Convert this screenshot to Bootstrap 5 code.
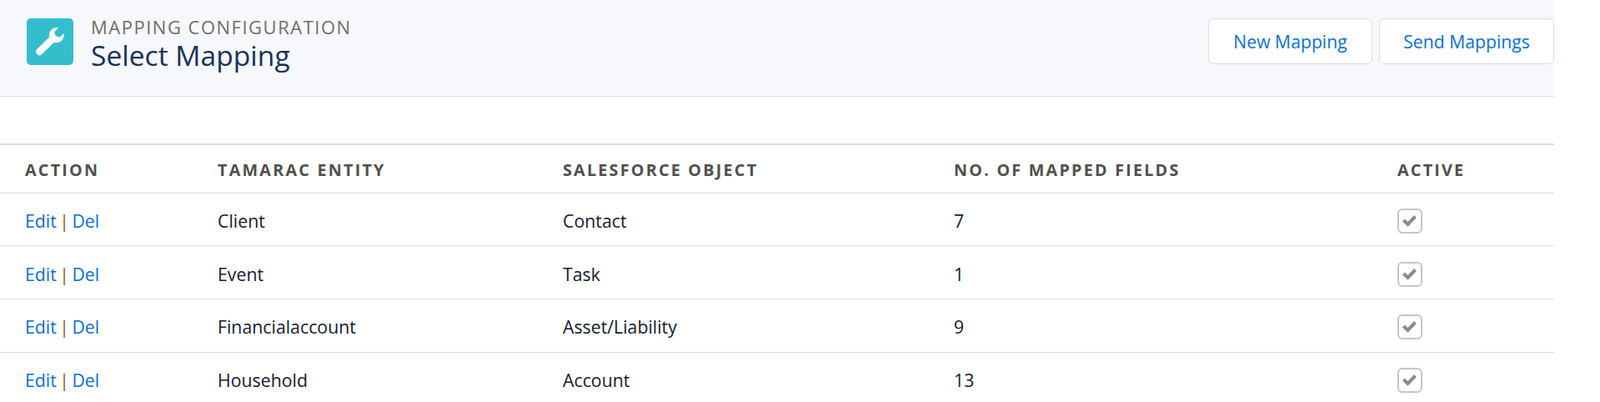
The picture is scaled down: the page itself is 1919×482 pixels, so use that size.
<!DOCTYPE html>
<html lang="en">
<head>
  <meta charset="UTF-8">
  <meta name="viewport" content="width=device-width, initial-scale=1.0">
  <title>Select Mapping</title>
  <link href="https://cdn.jsdelivr.net/npm/bootstrap@5.3.0/dist/css/bootstrap.min.css" rel="stylesheet">
  <style>
    body {
      background-color: #fff;
      font-family: "Open Sans", "Noto Sans", sans-serif;
      color: #16325c;
      overflow: hidden;
    }
    .page-wrap {
      width: 1864px;
    }
    .page-head {
      height: 116px;
      padding: 22px 0 0 32px;
      background-color: #f7f8fb;
      border-bottom: 1px solid #dddbe3;
    }
    .head-icon {
      width: 56px;
      height: 56px;
      margin-right: 21px;
      background-color: #34becd;
      border-radius: 5px;
    }
    .head-over {
      font-size: 22px;
      line-height: 22px;
      letter-spacing: 1.5px;
      margin-top: -1px;
      color: #706e6b;
    }
    .head-title {
      font-size: 33.6px;
      line-height: 47px;
      color: #16325c;
      margin: 0;
      font-weight: 400;
    }
    .head-btn {
      height: 55px;
      background-color: #fff;
      border: 1px solid #d8dde6;
      border-radius: 6px;
      color: #0b6fd6;
      font-size: 21.2px;
      padding: 0;
    }
    .btn-new { width: 197px; }
    .btn-send { width: 210px; }
    .map-table {
      margin-top: 56px;
      border-top: 2px solid #d8dde6;
      table-layout: fixed;
      width: 100%;
      margin-bottom: 0;
    }
    .map-table th,
    .map-table td {
      padding: 4px 0 0 30px;
      border-bottom: 1px solid #d8dde6;
      vertical-align: middle;
      box-shadow: none;
    }
    .map-table th {
      height: 58px;
      font-size: 19.8px;
      font-weight: 700;
      letter-spacing: 2.2px;
      color: #514f4d;
    }
    .map-table td {
      height: 63.7px;
      font-size: 21.3px;
      color: #16202e;
    }
    .map-table a {
      color: #0b6fd6;
      text-decoration: none;
    }
    .map-table .map-actions {
      word-spacing: -2.1px;
    }
    .map-sep {
      color: #8a5a14;
    }
    .check-box {
      display: block;
      width: 30px;
      height: 30px;
      border: 2.5px solid #c6c6c6;
      border-radius: 6px;
    }
  </style>
</head>
<body>
  <div class="page-wrap">
    <div class="page-head d-flex justify-content-between align-items-start">
      <div class="d-flex">
        <div class="head-icon d-flex align-items-center justify-content-center">
          <svg width="56" height="56" viewBox="0.5 0.5 53 53">
            <path fill="#fff" d="M12 35.5 L26.3 21.8 C24.6 16 29.5 10.2 36.6 11 L31.8 16 L33.4 20.4 L37.8 22 L42.8 17.2 C44 24 38 30 31.8 27.6 L17.4 41.4 C15.8 43 13.6 42.8 12.2 41.2 C10.8 39.4 10.6 37 12 35.5 Z"/>
          </svg>
        </div>
        <div>
          <div class="head-over">MAPPING CONFIGURATION</div>
          <h1 class="head-title">Select Mapping</h1>
        </div>
      </div>
      <div class="d-flex gap-2">
        <button class="btn head-btn btn-new" type="button">New Mapping</button>
        <button class="btn head-btn btn-send" type="button">Send Mappings</button>
      </div>
    </div>

    <table class="table map-table">
      <colgroup>
        <col style="width: 231px">
        <col style="width: 414px">
        <col style="width: 469px">
        <col style="width: 532px">
        <col>
      </colgroup>
      <thead>
        <tr>
          <th>ACTION</th>
          <th>TAMARAC ENTITY</th>
          <th>SALESFORCE OBJECT</th>
          <th>NO. OF MAPPED FIELDS</th>
          <th>ACTIVE</th>
        </tr>
      </thead>
      <tbody id="mapRows"></tbody>
    </table>
  </div>

  <script>
    const mappings = [
      ["Client", "Contact", 7],
      ["Event", "Task", 1],
      ["Financialaccount", "Asset/Liability", 9],
      ["Household", "Account", 13]
    ];

    const checkIcon = `<span class="check-box"><svg class="d-block" width="25" height="25" viewBox="0 0 25 25"><path fill="none" stroke="#8a8a8a" stroke-width="4" d="M5.5 12 L10.5 17 L19.5 7.5"/></svg></span>`;

    document.getElementById("mapRows").innerHTML = mappings.map(row => `
      <tr>
        <td class="map-actions"><a href="#">Edit</a> <span class="map-sep">|</span> <a href="#">Del</a></td>
        <td>${row[0]}</td>
        <td>${row[1]}</td>
        <td>${row[2]}</td>
        <td>${checkIcon}</td>
      </tr>`).join("");
  </script>
  <script src="https://cdn.jsdelivr.net/npm/bootstrap@5.3.0/dist/js/bootstrap.bundle.min.js"></script>
</body>
</html>
